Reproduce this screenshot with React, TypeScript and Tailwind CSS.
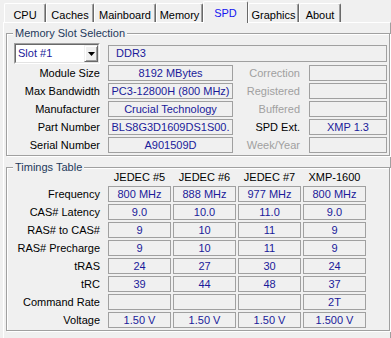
import type { ReactNode } from 'react';

const TABS = [
  { name: 'CPU', w: 'w-[42px]' },
  { name: 'Caches', w: 'w-[48px]' },
  { name: 'Mainboard', w: 'w-[62px]' },
  { name: 'Memory', w: 'w-[47px]' },
  { name: 'SPD', w: 'w-[45px]', active: true },
  { name: 'Graphics', w: 'w-[51px]' },
  { name: 'About', w: 'w-[42px]' },
];

const SLOT_ROWS = [
  { label: 'Module Size', value: '8192 MBytes', rLabel: 'Correction', rValue: '', rDim: true },
  { label: 'Max Bandwidth', value: 'PC3-12800H (800 MHz)', rLabel: 'Registered', rValue: '', rDim: true },
  { label: 'Manufacturer', value: 'Crucial Technology', rLabel: 'Buffered', rValue: '', rDim: true },
  { label: 'Part Number', value: 'BLS8G3D1609DS1S00.', rLabel: 'SPD Ext.', rValue: 'XMP 1.3', rDim: false },
  { label: 'Serial Number', value: 'A901509D', rLabel: 'Week/Year', rValue: '', rDim: true },
];

const HEADERS = ['JEDEC #5', 'JEDEC #6', 'JEDEC #7', 'XMP-1600'];

const TIMINGS: [string, string[]][] = [
  ['Frequency', ['800 MHz', '888 MHz', '977 MHz', '800 MHz']],
  ['CAS# Latency', ['9.0', '10.0', '11.0', '9.0']],
  ['RAS# to CAS#', ['9', '10', '11', '9']],
  ['RAS# Precharge', ['9', '10', '11', '9']],
  ['tRAS', ['24', '27', '30', '24']],
  ['tRC', ['39', '44', '48', '37']],
  ['Command Rate', ['', '', '', '2T']],
  ['Voltage', ['1.50 V', '1.50 V', '1.50 V', '1.500 V']],
];

function Field({ className = '', children }: { className?: string; children?: ReactNode }) {
  return (
    <div
      className={`h-[16px] shrink-0 overflow-hidden whitespace-nowrap border border-[#a0a0a0] text-center leading-[14px] text-[#1a1a9a] ${className}`}
    >
      {children}
    </div>
  );
}

function Group({ title, className = '', children }: { title: string; className?: string; children: ReactNode }) {
  return (
    <fieldset
      className={`ml-[2px] w-[384px] border border-[#a0a0a0] pl-[7px] pr-[2px] pb-[2px] shadow-[inset_1px_1px_0_#fff,1px_1px_0_#fff] ${className}`}
    >
      <legend className="ml-[-1px] bg-[#f0f0f0] px-[2px] leading-[13px] text-[#1e395b]">{title}</legend>
      {children}
    </fieldset>
  );
}

export default function App() {
  return (
    <div className="h-[338px] w-[391px] overflow-hidden bg-[#f0f0f0] font-['Liberation_Sans',Arial,sans-serif] text-[11px] leading-[13px] text-black">
      {/* tab strip */}
      <div className="flex h-[22px] items-end pl-[4px]">
        {TABS.map(t =>
          t.active ? (
            <div
              key={t.name}
              className={`relative z-10 mb-[-1px] h-[22px] ${t.w} rounded-t-[2px] border-l border-t border-r border-l-white border-t-white border-r-[#696969] bg-[#f0f0f0] pt-[5px] text-center text-[#1515f0]`}
            >
              {t.name}
            </div>
          ) : (
            <div
              key={t.name}
              className={`h-[19px] ${t.w} rounded-t-[2px] border-l border-t border-r border-l-white border-t-white border-r-[#696969] bg-[#f0f0f0] pt-[5px] text-center shadow-[inset_-1px_0_0_#a0a0a0]`}
            >
              {t.name}
            </div>
          )
        )}
      </div>

      {/* tab panel */}
      <div className="ml-[3px] h-[330px] w-[388px] border-l border-t border-r border-l-white border-t-white border-r-[#a0a0a0]">
        <Group title="Memory Slot Selection" className="mt-[4px] pt-[3px]">
          <div className="flex h-[21px] items-center">
            {/* slot combobox */}
            <div className="flex h-[21px] w-[86px] shrink-0 border border-t-[#a0a0a0] border-l-[#a0a0a0] border-r-white border-b-white bg-white">
              <div className="flex flex-1 border border-t-[#696969] border-l-[#696969] border-r-[#e3e3e3] border-b-[#e3e3e3]">
                <span className="flex-1 pl-[2px] leading-[17px] text-[#1a1a9a]">Slot #1</span>
                <div className="flex w-[14px] items-center justify-center border border-t-[#f0f0f0] border-l-[#f0f0f0] border-r-[#696969] border-b-[#696969] bg-[#f0f0f0] shadow-[inset_1px_1px_0_#fff,inset_-1px_-1px_0_#a0a0a0]">
                  <svg width="7" height="4" viewBox="0 0 7 4">
                    <path d="M0 0h7L3.5 4z" fill="#000" />
                  </svg>
                </div>
              </div>
            </div>
            <Field className="ml-[8px] h-[17px] w-[279px] pl-[7px] text-left leading-[15px]">DDR3</Field>
          </div>

          <div className="mt-[1px] flex flex-col gap-[2px]">
            {SLOT_ROWS.map(r => (
              <div key={r.label} className="flex h-[16px] items-center">
                <div className="w-[86px] shrink-0 text-right">{r.label}</div>
                <Field className="ml-[8px] w-[125px]">{r.value}</Field>
                <div className={`w-[67px] shrink-0 text-right ${r.rDim ? 'text-[#a0a0a0]' : 'text-black'}`}>{r.rLabel}</div>
                <Field className="ml-[9px] w-[78px]">{r.rValue}</Field>
              </div>
            ))}
          </div>
        </Group>

        <Group title="Timings Table" className="mt-[5px]">
          <div className="mt-[-3px] flex h-[13px] items-center">
            <div className="w-[86px] shrink-0" />
            <div className="ml-[8px] flex gap-[2px]">
              {HEADERS.map(h => (
                <div key={h} className="w-[63px] text-center">
                  {h}
                </div>
              ))}
            </div>
          </div>
          <div className="mt-[2px] flex flex-col gap-[2px]">
            {TIMINGS.map(([label, vals]) => (
              <div key={label} className="flex h-[16px] items-center">
                <div className="w-[86px] shrink-0 text-right">{label}</div>
                <div className="ml-[8px] flex gap-[2px]">
                  {vals.map((v, i) => (
                    <Field key={i} className="w-[63px]">
                      {v}
                    </Field>
                  ))}
                </div>
              </div>
            ))}
          </div>
        </Group>
      </div>
    </div>
  );
}
